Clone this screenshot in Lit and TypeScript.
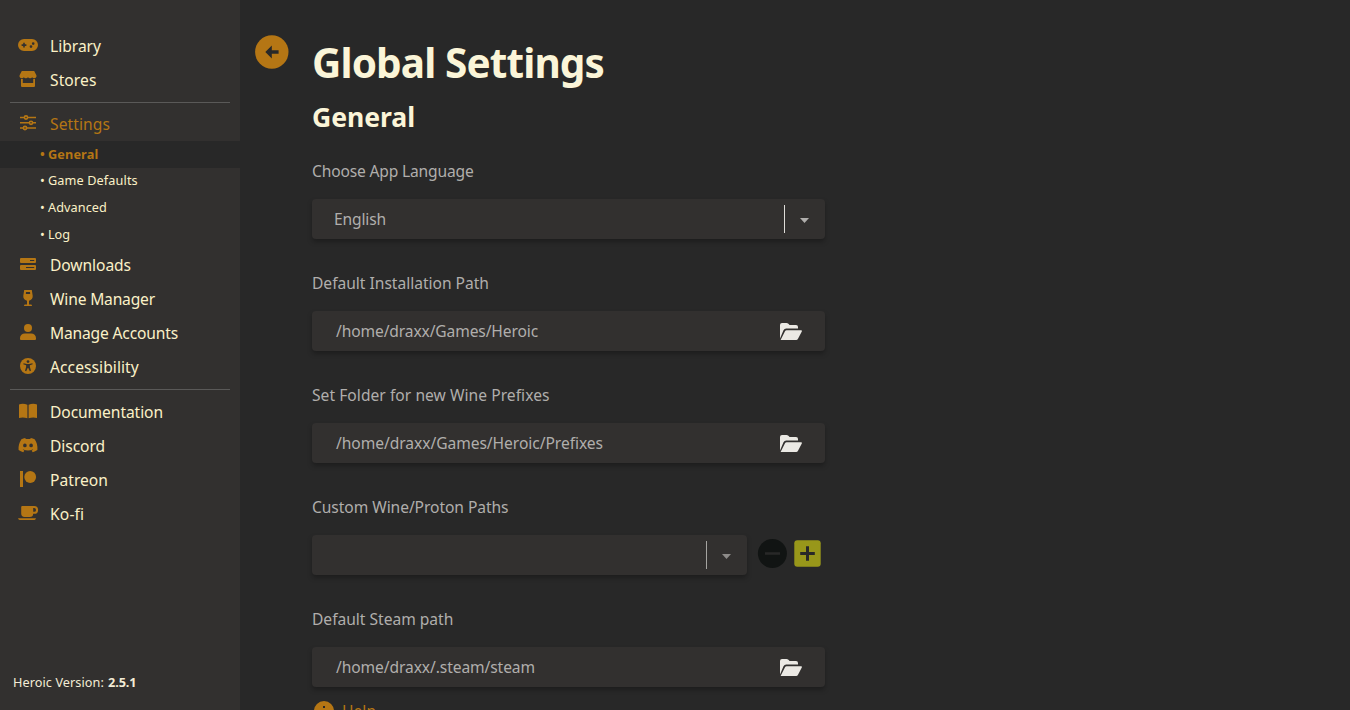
import { LitElement, html, css, svg } from "lit";
import { customElement, property } from "lit/decorators.js";
import { classMap } from "lit/directives/class-map.js";

/** A single line of text whose letter spacing is tuned to a given advance width. */
@customElement("fit-text")
class FitText extends LitElement {
  @property() text = "";
  @property({ type: Number }) fit = 0;
  static styles = css`
    :host { display: inline-block; white-space: pre; }
    span { display: inline-block; white-space: pre; }
  `;
  render() {
    return html`<span>${this.text}</span>`;
  }
  updated() {
    const el = this.renderRoot.querySelector("span") as HTMLElement;
    el.style.letterSpacing = "0px";
    const natural = el.getBoundingClientRect().width;
    const count = this.text.length;
    if (this.fit && count) el.style.letterSpacing = `${(this.fit - natural) / count}px`;
  }
}

const icons: Record<string, unknown> = {
  gamepad: svg`<path fill-rule="evenodd" d="M8 5H16A6 6 0 0 1 16 17H8A6 6 0 0 1 8 5ZM7.2 8.6V10.2H5.6V11.8H7.2V13.4H8.8V11.8H10.4V10.2H8.8V8.6ZM15 11.1A1.35 1.35 0 1 0 15 13.8A1.35 1.35 0 1 0 15 11.1ZM17.2 8.1A1.35 1.35 0 1 0 17.2 10.8A1.35 1.35 0 1 0 17.2 8.1Z" transform="translate(0 .1)"/>`,
  store: svg`<path d="M5.8 3H18.2L20.4 7.2C20.9 8.8 19.8 10.2 18.4 10.2 17.4 10.2 16.8 9.8 16.2 9.2 15.6 9.8 15 10.2 14.1 10.2 13.2 10.2 12.6 9.8 12 9.2 11.4 9.8 10.8 10.2 9.9 10.2 9 10.2 8.4 9.8 7.8 9.2 7.2 9.8 6.6 10.2 5.6 10.2 4.2 10.2 3.1 8.8 3.6 7.2Z"/><path fill-rule="evenodd" d="M5 11H6.8V15H17.2V11H19V18Q19 19 18 19H6Q5 19 5 18Z"/>`,
  sliders: svg`<g fill="none" stroke="currentColor" stroke-width="1.6"><path d="M4 5.5H8.3M11.7 5.5H20M4 10.8H13.3M16.7 10.8H20M4 16H7.3M10.7 16H20"/><circle cx="10" cy="5.5" r="1.6"/><circle cx="15" cy="10.8" r="1.6"/><circle cx="9" cy="16" r="1.6"/></g>`,
  bars: svg`<path fill-rule="evenodd" d="M5 5H19Q20 5 20 6V9Q20 10 19 10H5Q4 10 4 9V6Q4 5 5 5ZM14 7V8.1H18.2V7ZM5 12H19Q20 12 20 13V16Q20 17 19 17H5Q4 17 4 16V13Q4 12 5 12ZM10 14V15.1H18.2V14Z"/>`,
  wine: svg`<path fill-rule="evenodd" d="M8.2 3H15.8L16.7 8.8C17 11.3 15.4 13.3 13 13.8V17.5H15.2Q16 17.8 16 19H8Q8 17.8 8.8 17.5H11V13.8C8.6 13.3 7 11.3 7.3 8.8ZM10 4.9L9.8 7H14.2L14 4.9Z"/>`,
  user: svg`<circle cx="12" cy="7" r="4"/><path d="M4 19V17.2A4.8 4.8 0 0 1 8.8 12.4H15.2A4.8 4.8 0 0 1 20 17.2V18Q20 19 19 19H5Q4 19 4 18Z"/>`,
  access: svg`<circle cx="12" cy="11" r="8"/><g fill="#32302f"><circle cx="12" cy="6.6" r="1.35"/><path d="M7.6 8.2L10.8 9H13.2L16.4 8.2 16.7 9.3 13.9 10.3V12.1L15 15.7 13.8 16.2 12.3 13H11.7L10.2 16.2 9 15.7 10.1 12.1V10.3L7.3 9.3Z"/></g>`,
  book: svg`<path d="M3 4.4C5.7 3.5 8.6 3.6 11.4 4.7V18.3C8.5 17.3 5.7 17.2 3 18ZM21 4.4C18.3 3.5 15.4 3.6 12.6 4.7V18.3C15.5 17.3 18.3 17.2 21 18Z"/>`,
  discord: svg`<path fill-rule="evenodd" d="M18.6 5.2A16 16 0 0 0 14.8 4L14.2 5.1A14.5 14.5 0 0 0 9.8 5.1L9.2 4A16 16 0 0 0 5.4 5.2C3 8.7 2.3 12.2 2.6 15.9A15 15 0 0 0 7.3 18.2L8.4 16.5 6.8 15.7 7.2 15.4A11.4 11.4 0 0 0 16.8 15.4L17.2 15.7 15.6 16.5 16.7 18.2A15 15 0 0 0 21.4 15.9C21.8 11.6 20.7 8.2 18.6 5.2ZM8.9 9.5A1.8 1.9 0 1 0 8.9 13.3A1.8 1.9 0 1 0 8.9 9.5ZM15.1 9.5A1.8 1.9 0 1 0 15.1 13.3A1.8 1.9 0 1 0 15.1 9.5Z"/>`,
  patreon: svg`<path d="M4 3H7V19H4Z"/><circle cx="14.2" cy="9" r="5.9"/>`,
  coffee: svg`<path fill-rule="evenodd" d="M6.2 4H18.2A3.9 3.9 0 0 1 18.2 11.8H17.2A3.4 3.4 0 0 1 13.8 15H8.6A3.4 3.4 0 0 1 5.2 11.6V5Q5.2 4 6.2 4ZM17.2 6V9.8H18.1A1.9 1.9 0 0 0 18.1 6ZM2 16.2H20Q19.6 18 18.4 18H3.8Q2.4 18 2 16.2Z"/>`,
};

interface Item {
  icon: string;
  label: string;
  w: number;
  active?: boolean;
}

const top: Item[] = [
  { icon: "gamepad", label: "Library", w: 51 },
  { icon: "store", label: "Stores", w: 46.5 },
];
const settings: Item[] = [{ icon: "sliders", label: "Settings", w: 60, active: true }];
const subs = [
  { label: "General", w: 50.3, active: true },
  { label: "Game Defaults", w: 89.8 },
  { label: "Advanced", w: 59 },
  { label: "Log", w: 22 },
];
const manage: Item[] = [
  { icon: "bars", label: "Downloads", w: 81 },
  { icon: "wine", label: "Wine Manager", w: 105 },
  { icon: "user", label: "Manage Accounts", w: 128 },
  { icon: "access", label: "Accessibility", w: 88.8 },
];
const links: Item[] = [
  { icon: "book", label: "Documentation", w: 113 },
  { icon: "discord", label: "Discord", w: 55 },
  { icon: "patreon", label: "Patreon", w: 58 },
  { icon: "coffee", label: "Ko-fi", w: 34.3 },
];

@customElement("side-bar")
class SideBar extends LitElement {
  static styles = css`
    :host { display: flex; flex-direction: column; box-sizing: border-box; width: 240px; height: 710px; background: #32302f; color: #fbf1c7; padding-top: 29px; flex: none; }
    .row { display: flex; align-items: center; height: 34px; padding-left: 16px; gap: 10px; font-size: 15.6px; line-height: 34px; }
    .row svg { width: 24px; height: 24px; fill: currentColor; color: #b57614; flex: none; }
    .active { color: #b57614; }
    hr { width: 220px; height: 1px; border: 0; background: #5a5958; margin: 5px 10px 4px; flex: none; }
    .last { margin-bottom: 5px; }
    .sub { display: flex; align-items: center; height: 26.75px; font-size: 12.7px; padding-left: 40px; box-sizing: border-box; line-height: 24.6px; padding-bottom: 1.4px; }
    .dot { width: 8px; flex: none; }
    .sub.active { background: #282828; font-weight: 700; padding-bottom: 0; line-height: 26px; }
    .version { display: flex; gap: 4px; margin-top: auto; padding: 0 0 18px 13px; font-size: 12.7px; line-height: 20px; color: #f3ecd6; }
    .version b { font-weight: 700; }
  `;
  row(i: Item) {
    return html`<div class=${classMap({ row: true, active: !!i.active })}>
      <svg viewBox="0 0 24 24">${icons[i.icon]}</svg>
      <fit-text .text=${i.label} .fit=${i.w}></fit-text>
    </div>`;
  }
  render() {
    return html`
      ${top.map((i) => this.row(i))}
      <hr />
      ${settings.map((i) => this.row(i))}
      ${subs.map(
        (s) => html`<div class=${classMap({ sub: true, active: !!s.active })}>
          <span class="dot">•</span><fit-text .text=${s.label} .fit=${s.w}></fit-text>
        </div>`
      )}
      ${manage.map((i) => this.row(i))}
      <hr class="last" />
      ${links.map((i) => this.row(i))}
      <div class="version">
        <fit-text .text=${"Heroic Version:"} .fit=${91}></fit-text>
        <b><fit-text .text=${"2.5.1"} .fit=${28.5}></fit-text></b>
      </div>
    `;
  }
}

const folder = svg`<path d="M0 15.6V2Q0 0 2 0H6.5Q7.6 0 8.4 .8L9.6 2H16Q18 2 18 4V5.6H6.2Q4.4 5.6 3.5 7.2Z"/><path d="M.6 17L5 8.2Q5.5 7.2 6.6 7.2H21Q22.4 7.2 21.8 8.5L18 15.8Q17.4 17 16.2 17Z"/>`;

@customElement("settings-page")
class SettingsPage extends LitElement {
  static styles = css`
    :host { display: flex; flex: 1; height: 710px; overflow: hidden; color: #b0aeac; }
    .back { width: 34px; height: 34px; margin: 35px 23px 0 15px; flex: none; }
    .body { display: flex; flex-direction: column; width: 513px; flex: none; }
    h1, h2 { margin: 0; color: #fbf5d8; font-weight: 700; }
    h1 { font-size: 40.5px; line-height: 56px; height: 56px; margin-top: 35px; }
    h2 { font-size: 26.6px; line-height: 36px; height: 36px; margin-top: 8px; }
    .field { height: 112px; flex: none; }
    .field:last-of-type { height: 80px; }
    .fields { padding-top: 24px; }
    .label { height: 24px; line-height: 24px; margin-bottom: 16px; font-size: 15.6px; }
    .line { display: flex; align-items: center; }
    .box { display: flex; align-items: center; box-sizing: border-box; width: 513px; height: 40px; border-radius: 4px; background: #32302f; box-shadow: 0 3px 5px rgba(0, 0, 0, 0.28); padding: 0 23px 0 24px; font-size: 15.6px; line-height: 40px; }
    .box fit-text { flex: 1; }
    .select { padding: 0 16px 0 22px; }
    .narrow { width: 435px; }
    .sep { width: 1px; height: 28px; background: #dedcd8; margin-right: 15px; }
    .caret { width: 9px; height: 5px; fill: #b0aeac; margin-top: 2px; }
    .folder { width: 22px; height: 17px; fill: #ebe9e4; margin-top: 1px; }
    .dim .sep { background: #a5a4a1; }
    .dim .caret { fill: #8d8b89; }
    .minus { width: 30px; height: 30px; margin: -3px 0 0 10px; }
    .plus { width: 27px; height: 27px; margin: -3px 0 0 7px; }
    .help { display: flex; align-items: center; gap: 8px; margin-top: 13px; padding-left: 2px; height: 22px; color: #b57614; font-size: 15.6px; line-height: 22px; }
    .help svg { width: 20px; height: 20px; }
  `;
  caret() {
    return html`<span class="sep"></span><svg class="caret" viewBox="0 0 9 5"><path d="M0 0H9L4.5 5Z" /></svg>`;
  }
  path(label: string, lw: number, value: string, vw: number) {
    return html`<section class="field">
      <div class="label"><fit-text .text=${label} .fit=${lw}></fit-text></div>
      <div class="box">
        <fit-text .text=${value} .fit=${vw}></fit-text>
        <svg class="folder" viewBox="0 0 22 17">${folder}</svg>
      </div>
    </section>`;
  }
  render() {
    return html`
      <svg class="back" viewBox="0 0 34 34">
        <circle cx="16.8" cy="17" r="16.7" fill="#b57614" />
        <path d="M10.3 17L16.8 10.5V15.3H23.6V18.7H16.8V23.5Z" fill="#282828" />
      </svg>
      <div class="body">
        <h1><fit-text .text=${"Global Settings"} .fit=${292}></fit-text></h1>
        <h2><fit-text .text=${"General"} .fit=${103}></fit-text></h2>
        <div class="fields">
          <section class="field">
            <div class="label"><fit-text .text=${"Choose App Language"} .fit=${161.5}></fit-text></div>
            <div class="box select"><fit-text .text=${"English"} .fit=${52}></fit-text>${this.caret()}</div>
          </section>
          ${this.path("Default Installation Path", 177, "/home/draxx/Games/Heroic", 202)}
          ${this.path("Set Folder for new Wine Prefixes", 237.5, "/home/draxx/Games/Heroic/Prefixes", 267)}
          <section class="field">
            <div class="label"><fit-text .text=${"Custom Wine/Proton Paths"} .fit=${196.5}></fit-text></div>
            <div class="line">
              <div class="box select narrow dim"><fit-text></fit-text>${this.caret()}</div>
              <svg class="minus" viewBox="0 0 30 30">
                <circle cx="15.4" cy="14.5" r="14.5" fill="#111413" />
                <path d="M8 13.2H23V15.8H8Z" fill="#282828" />
              </svg>
              <svg class="plus" viewBox="0 0 27 27">
                <rect x=".3" y=".3" width="26.4" height="26.4" rx="3" fill="#98971a" />
                <path d="M12 6.2H15V12H20.8V15H15V20.8H12V15H6.2V12H12Z" fill="#282828" />
              </svg>
            </div>
          </section>
          ${this.path("Default Steam path", 141.3, "/home/draxx/.steam/steam", 199)}
          <div class="help">
            <svg viewBox="0 0 20 20">
              <circle cx="10" cy="10" r="10" fill="#b57614" />
              <path d="M9 5H11V7H9ZM9 9H11V15H9Z" fill="#282828" />
            </svg>
            <fit-text .text=${"Help"} .fit=${34}></fit-text>
          </div>
        </div>
      </div>
    `;
  }
}

@customElement("app-root")
class AppRoot extends LitElement {
  static styles = css`
    :host { display: flex; width: 1350px; height: 710px; overflow: hidden; background: #282828; font-family: "Noto Sans", "Open Sans", sans-serif; }
  `;
  render() {
    return html`<side-bar></side-bar><settings-page></settings-page>`;
  }
}
